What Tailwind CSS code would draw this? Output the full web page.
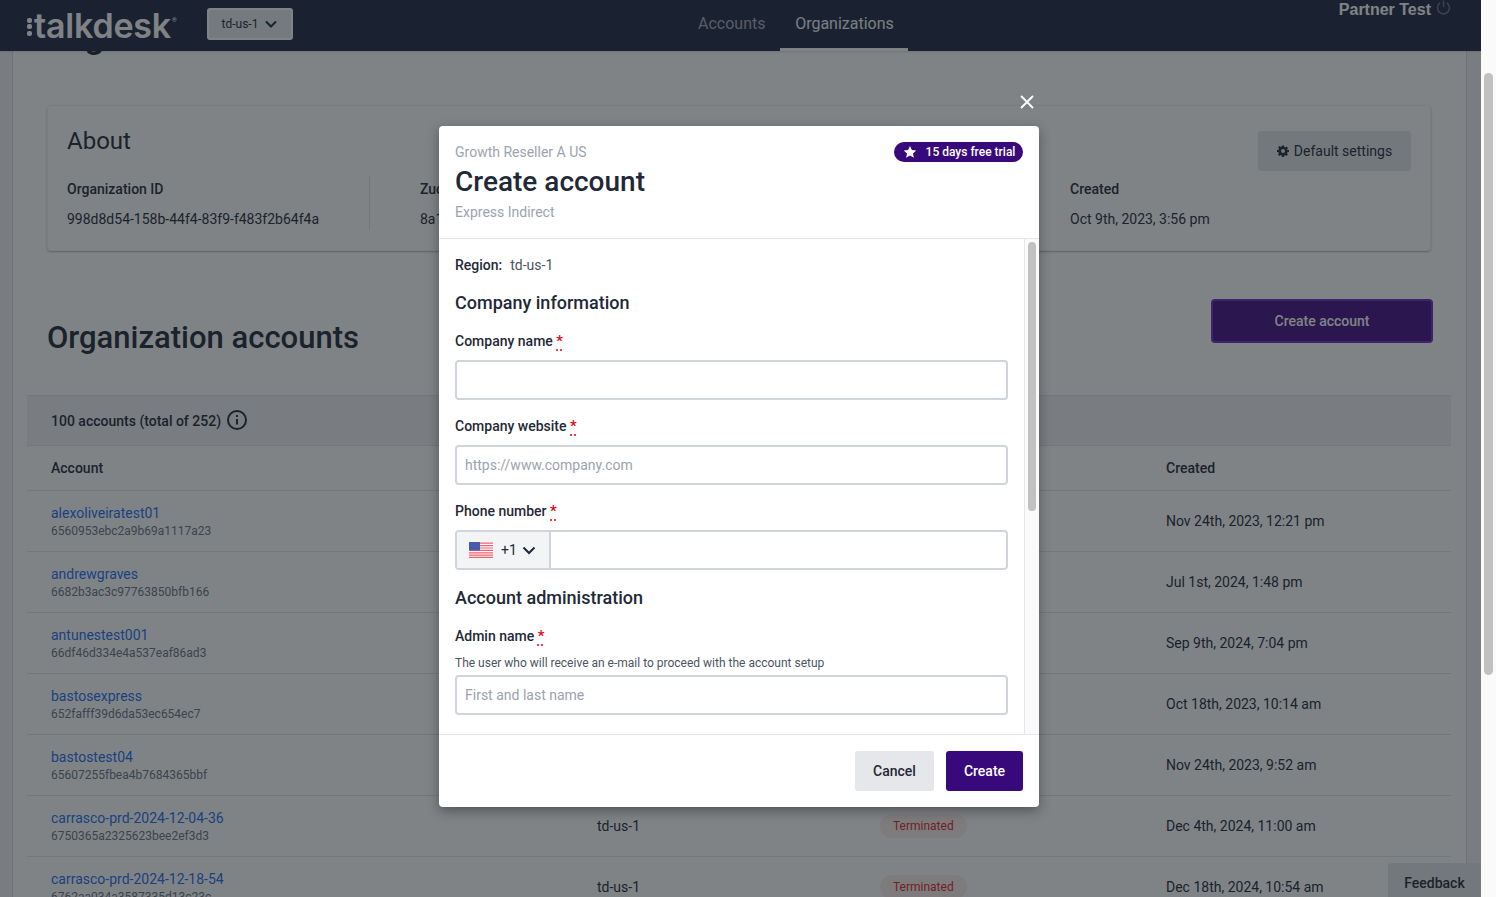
<!DOCTYPE html>
<html lang="en">
<head>
    <meta charset="UTF-8">
    <meta name="viewport" content="width=device-width, initial-scale=1.0">
    <title>Organization accounts</title>
    <script src="https://cdn.jsdelivr.net/npm/@tailwindcss/browser@4"></script>
</head>
<body class="h-screen overflow-hidden bg-white font-['Roboto',sans-serif] text-[#1f2937]">
<div class="flex h-[897px]">
    <!-- page under the dialog -->
    <div class="relative h-full w-[1481px] overflow-hidden bg-[#f1f2f3]">
        <header class="relative z-10 flex h-[51px] items-center bg-[#1f2845] pl-[27px] shadow">
            <div class="flex w-[180px] items-center">
                <div class="mt-[2px] mr-[2px] flex flex-col gap-[1.5px]">
                    <span class="h-[5px] w-[5px] rounded-[2px] bg-white"></span>
                    <span class="h-[5px] w-[5px] rounded-[2px] bg-white"></span>
                    <span class="h-[5px] w-[5px] rounded-[2px] bg-white"></span>
                </div>
                <span class="font-['Inter',sans-serif] text-[34px] leading-none font-semibold tracking-[-0.2px] text-white">talkdesk</span>
                <span class="mb-[12px] ml-[1px] text-[6px] leading-none text-white">®</span>
            </div>
            <button class="-mt-[3px] flex h-[32px] w-[86px] items-center justify-center gap-[6px] rounded-[3px] border-2 border-white bg-[#e8eaed] text-xs text-[#1f2937]">
                td-us-1
                <svg class="h-[14px] w-[14px]" viewBox="0 0 14 14" fill="none" stroke="currentColor" stroke-width="2"><path d="M2 4.5l5 5 5-5"/></svg>
            </button>
            <nav class="ml-[405px] flex h-full text-base">
                <a class="flex h-full items-center pr-[15px] pb-[4px] text-[#a8abb8]">Accounts</a>
                <a class="flex h-full w-[128px] items-center justify-center border-b-[3px] border-white pb-[1px] text-[#f3f4f6]">Organizations</a>
            </nav>
            <div class="absolute top-0 right-[30px] flex items-start gap-[5px]">
                <span class="font-['Liberation_Sans',sans-serif] text-base leading-[19px] font-bold text-white">Partner Test</span>
                <svg class="h-[16px] w-[15px]" viewBox="0 0 16 16" fill="none" stroke="#6b7280" stroke-width="1.6"><path d="M8 0v7M4.4 2.6a6.4 6.4 0 1 0 7.2 0"/></svg>
            </div>
        </header>

        <main class="ml-[12px] h-[846px] w-[1455px] overflow-hidden border-x border-[#d9dbde] bg-white pr-[15px] pl-[14px]">
            <h1 class="-mt-[41px] ml-[20px] h-[50px] text-[36px] leading-[50px] font-medium">Organization</h1>

            <section class="mx-[20px] mt-[45px] h-[146px] rounded-[4px] border border-[#f0f1f2] px-[19px] pt-[20px] shadow-[0_1px_2px_rgba(0,0,0,0.3)]">
                <div class="flex h-[40px] items-start justify-between">
                    <h2 class="text-2xl leading-[30px]">About</h2>
                    <button class="mt-[5px] flex h-[40px] w-[153px] items-center justify-center gap-[5px] rounded-[3px] bg-[#e5e7eb] text-sm">
                        <svg class="h-[12px] w-[12px]" viewBox="0 0 24 24" fill="currentColor"><path fill-rule="evenodd" d="M10 1h4l.6 3.2 1.9.8 2.7-1.8 2.8 2.8-1.8 2.7.8 1.9L24 10v4l-3.2.6-.8 1.9 1.8 2.7-2.8 2.8-2.7-1.8-1.9.8L14 24h-4l-.6-3.2-1.9-.8-2.7 1.8-2.8-2.8 1.8-2.7-.8-1.9L0 14v-4l3.2-.6.8-1.9L2.2 4.8 5 2l2.7 1.8 1.9-.8zM12 8a4 4 0 1 0 0 8 4 4 0 0 0 0-8z"/></svg>
                        Default settings
                    </button>
                </div>
                <div class="mt-[10px] flex text-sm">
                    <div class="h-[54px] w-[303px] border-r border-[#e5e7eb] pt-[3px]">
                        <p class="font-medium">Organization ID</p>
                        <p class="mt-[10px]">998d8d54-158b-44f4-83f9-f483f2b64f4a</p>
                    </div>
                    <div class="w-[700px] pt-[3px] pl-[50px]">
                        <p class="font-medium">Zuora ID</p>
                        <p class="mt-[10px]">8a1</p>
                    </div>
                    <div class="pt-[3px]">
                        <p class="font-medium">Created</p>
                        <p class="mt-[10px]">Oct 9th, 2023, 3:56 pm</p>
                    </div>
                </div>
            </section>

            <div class="mx-[20px] mt-[48px] flex h-[96px] items-start justify-between">
                <h2 class="mt-[17px] text-[31px] leading-[44px] font-medium">Organization accounts</h2>
                <button class="-mr-[2px] h-[44px] w-[222px] rounded-[4px] border-2 border-[#6d2fc4] bg-[#450f85] text-sm font-medium text-white">Create account</button>
            </div>

            <div class="text-sm">
                <div class="flex h-[51px] items-center gap-[6px] border-y border-[#e2e4e7] bg-[#f1f2f3] pl-[24px] font-medium">
                    100 accounts (total of 252)
                    <svg class="-mt-[2px] h-[20px] w-[20px]" viewBox="0 0 20 20" fill="none" stroke="currentColor" stroke-width="2"><circle cx="10" cy="10" r="9"/><path d="M10 9v5.5M10 5v2"/></svg>
                </div>
                <div class="grid h-[45px] grid-cols-[546px_283px_286px_1fr] items-center border-b border-[#e2e4e7] pl-[24px] font-medium">
                    <span>Account</span><span>Region</span><span>Status</span><span>Created</span>
                </div>

                <div class="grid h-[61px] grid-cols-[546px_283px_286px_1fr] items-center border-b border-[#e2e4e7] pl-[24px]">
                    <div><a class="block leading-[18px] text-[#1d6ef0]">alexoliveiratest01</a><p class="mt-[2px] text-xs leading-[15px] text-[#6b7280]">6560953ebc2a9b69a1117a23</p></div>
                    <span>td-us-1</span><span></span><span>Nov 24th, 2023, 12:21 pm</span>
                </div>
                <div class="grid h-[61px] grid-cols-[546px_283px_286px_1fr] items-center border-b border-[#e2e4e7] pl-[24px]">
                    <div><a class="block leading-[18px] text-[#1d6ef0]">andrewgraves</a><p class="mt-[2px] text-xs leading-[15px] text-[#6b7280]">6682b3ac3c97763850bfb166</p></div>
                    <span>td-us-1</span><span></span><span>Jul 1st, 2024, 1:48 pm</span>
                </div>
                <div class="grid h-[61px] grid-cols-[546px_283px_286px_1fr] items-center border-b border-[#e2e4e7] pl-[24px]">
                    <div><a class="block leading-[18px] text-[#1d6ef0]">antunestest001</a><p class="mt-[2px] text-xs leading-[15px] text-[#6b7280]">66df46d334e4a537eaf86ad3</p></div>
                    <span>td-us-1</span><span></span><span>Sep 9th, 2024, 7:04 pm</span>
                </div>
                <div class="grid h-[61px] grid-cols-[546px_283px_286px_1fr] items-center border-b border-[#e2e4e7] pl-[24px]">
                    <div><a class="block leading-[18px] text-[#1d6ef0]">bastosexpress</a><p class="mt-[2px] text-xs leading-[15px] text-[#6b7280]">652fafff39d6da53ec654ec7</p></div>
                    <span>td-us-1</span><span></span><span>Oct 18th, 2023, 10:14 am</span>
                </div>
                <div class="grid h-[61px] grid-cols-[546px_283px_286px_1fr] items-center border-b border-[#e2e4e7] pl-[24px]">
                    <div><a class="block leading-[18px] text-[#1d6ef0]">bastostest04</a><p class="mt-[2px] text-xs leading-[15px] text-[#6b7280]">65607255fbea4b7684365bbf</p></div>
                    <span>td-us-1</span><span></span><span>Nov 24th, 2023, 9:52 am</span>
                </div>
                <div class="grid h-[61px] grid-cols-[546px_283px_286px_1fr] items-center border-b border-[#e2e4e7] pl-[24px]">
                    <div><a class="block leading-[18px] text-[#1d6ef0]">carrasco-prd-2024-12-04-36</a><p class="mt-[2px] text-xs leading-[15px] text-[#6b7280]">6750365a2325623bee2ef3d3</p></div>
                    <span>td-us-1</span><span class="w-fit rounded-[12px] bg-[#fdeeec] px-[13px] text-xs leading-[24px] text-[#dc2626]">Terminated</span><span>Dec 4th, 2024, 11:00 am</span>
                </div>
                <div class="grid h-[61px] grid-cols-[546px_283px_286px_1fr] items-center border-b border-[#e2e4e7] pl-[24px]">
                    <div><a class="block leading-[18px] text-[#1d6ef0]">carrasco-prd-2024-12-18-54</a><p class="mt-[2px] text-xs leading-[15px] text-[#6b7280]">6762aa034a3587335d13c23c</p></div>
                    <span>td-us-1</span><span class="w-fit rounded-[12px] bg-[#fdeeec] px-[13px] text-xs leading-[24px] text-[#dc2626]">Terminated</span><span>Dec 18th, 2024, 10:54 am</span>
                </div>
            </div>
        </main>

        <div class="absolute right-0 bottom-0 z-10 flex h-[34px] w-[93px] items-center justify-center rounded-tl-[3px] bg-[#e5e7eb] pt-[6px] text-sm font-medium">Feedback</div>

        <!-- dialog -->
        <div class="absolute inset-0 z-20 bg-[#161d23]/55 pt-[126px] pl-[439px]">
            <button class="absolute top-[94px] left-[1019px] text-white">
                <svg class="h-[16px] w-[16px]" viewBox="0 0 16 16" fill="none" stroke="currentColor" stroke-width="1.8"><path d="M2 2l12 12M14 2L2 14"/></svg>
            </button>
            <div class="flex h-[681px] w-[600px] flex-col rounded-[4px] bg-white shadow-[0_4px_12px_rgba(0,0,0,0.35)]">
                <div class="relative h-[113px] shrink-0 border-b border-[#e5e7eb] px-[16px] pt-[17px]">
                    <p class="text-sm leading-[18px] text-[#9ca3af]">Growth Reseller A US</p>
                    <h2 class="mt-[2px] text-[28px] leading-[38px] font-medium text-[#1f2937]">Create account</h2>
                    <p class="mt-[2px] text-sm leading-[18px] text-[#9ca3af]">Express Indirect</p>
                    <span class="absolute top-[16px] right-[16px] flex h-[20px] w-[129px] items-center justify-center gap-[9px] rounded-full bg-[#37097a] pl-[1px] text-xs font-medium text-white">
                        <svg class="h-[14px] w-[14px]" viewBox="0 0 24 24" fill="currentColor"><path d="M12 1.5l3.2 6.9 7.5.9-5.6 5.1 1.5 7.4L12 18.1l-6.6 3.7 1.5-7.4-5.6-5.1 7.5-.9z"/></svg>
                        15 days free trial
                    </span>
                </div>

                <div class="relative h-[495px] shrink-0 overflow-hidden px-[16px]">
                    <p class="mt-[17px] text-sm leading-[18px]"><span class="font-medium">Region:</span><span class="ml-[8px] text-[#4b5563]">td-us-1</span></p>
                    <h3 class="mt-[17px] text-lg leading-[24px] font-medium">Company information</h3>

                    <label class="mt-[16px] block text-sm leading-[20px] font-medium">Company name <abbr class="text-[15px] leading-none text-red-600 underline-offset-[4px]" title="required">*</abbr></label>
                    <input class="mt-[9px] block h-[40px] w-[553px] rounded-[4px] border-2 border-[#d1d5db] px-[8px] text-sm">

                    <label class="mt-[16px] block text-sm leading-[20px] font-medium">Company website <abbr class="text-[15px] leading-none text-red-600 underline-offset-[4px]" title="required">*</abbr></label>
                    <input class="mt-[9px] block h-[40px] w-[553px] rounded-[4px] border-2 border-[#d1d5db] px-[8px] text-sm placeholder:text-[#9ca3af]" placeholder="https://www.company.com">

                    <label class="mt-[16px] block text-sm leading-[20px] font-medium">Phone number <abbr class="text-[15px] leading-none text-red-600 underline-offset-[4px]" title="required">*</abbr></label>
                    <div class="mt-[9px] flex h-[40px] w-[553px] overflow-hidden rounded-[4px] border-2 border-[#d1d5db]">
                        <div class="flex w-[94px] items-center gap-[8px] border-r-2 border-[#d1d5db] bg-[#f3f4f6] pl-[12px] text-sm">
                            <svg class="h-[16px] w-[24px]" viewBox="0 0 24 16"><rect width="24" height="16" fill="#fff"/><path d="M0 1.2h24M0 3.6h24M0 6h24M0 8.4h24M0 10.8h24M0 13.2h24M0 15.4h24" stroke="#f0616d" stroke-width="1.2"/><rect width="11" height="8.4" fill="#4a5aa8"/></svg>
                            <span>+1</span>
                            <svg class="-ml-[3px] h-[14px] w-[14px]" viewBox="0 0 14 14" fill="none" stroke="currentColor" stroke-width="2"><path d="M1.5 4.5L7 10l5.5-5.5"/></svg>
                        </div>
                    </div>

                    <h3 class="mt-[16px] text-lg leading-[24px] font-medium">Account administration</h3>
                    <label class="mt-[16px] block text-sm leading-[20px] font-medium">Admin name <abbr class="text-[15px] leading-none text-red-600 underline-offset-[4px]" title="required">*</abbr></label>
                    <p class="mt-[9px] text-xs leading-[16px] text-[#4b5563]">The user who will receive an e-mail to proceed with the account setup</p>
                    <input class="mt-[4px] block h-[40px] w-[553px] rounded-[4px] border-2 border-[#d1d5db] px-[8px] text-sm placeholder:text-[#9ca3af]" placeholder="First and last name">

                    <div class="absolute top-0 right-0 h-full w-[15px] border-l border-[#e5e7eb] bg-[#fafafa]">
                        <div class="mx-auto mt-[3px] h-[269px] w-[8px] rounded-full bg-[#c1c1c1]"></div>
                    </div>
                </div>

                <div class="flex flex-1 items-start justify-end gap-[12px] border-t border-[#e5e7eb] px-[16px] pt-[16px] text-sm font-medium">
                    <button class="h-[40px] w-[79px] rounded-[3px] bg-[#e5e7eb]">Cancel</button>
                    <button class="h-[40px] w-[77px] rounded-[3px] bg-[#37097a] text-white">Create</button>
                </div>
            </div>
        </div>
    </div>

    <!-- browser scrollbar -->
    <div class="h-full w-[15px] bg-[#fafafa] pt-[73px]">
        <div class="mx-auto h-[602px] w-[9px] rounded-full bg-[#c1c1c1]"></div>
    </div>
</div>
</body>
</html>
